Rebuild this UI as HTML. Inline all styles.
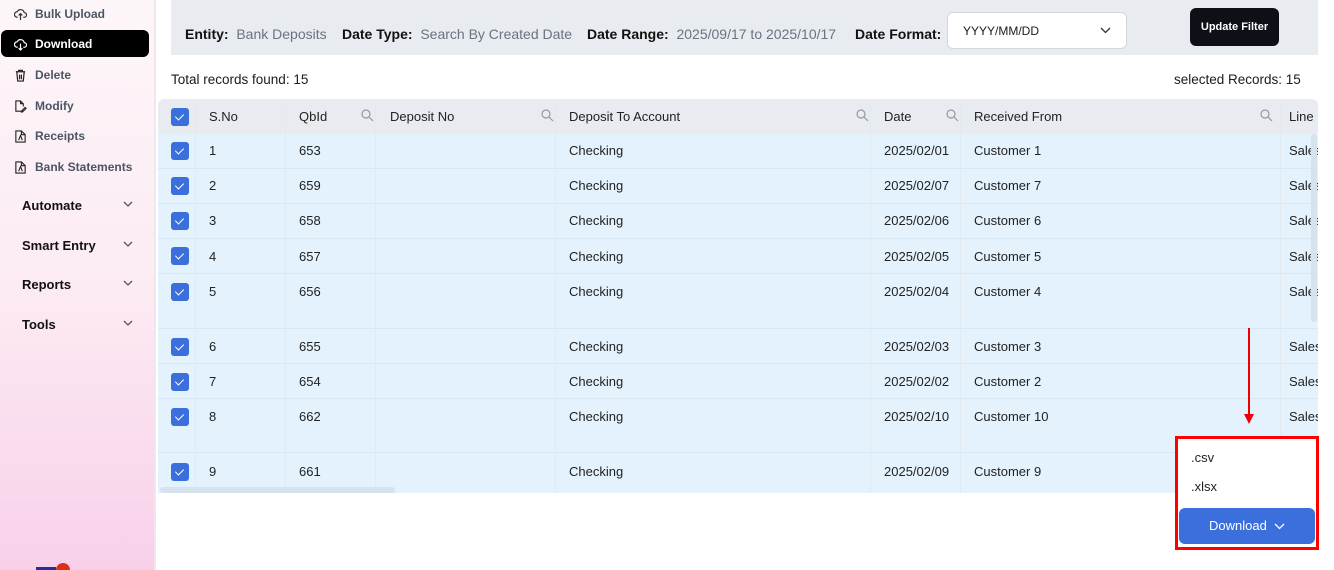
<!DOCTYPE html>
<html><head><style>
*{box-sizing:border-box;margin:0;padding:0}
html,body{width:1334px;height:570px;overflow:hidden}
body{background:#fff;font-family:"Liberation Sans",sans-serif;position:relative;color:#1b1b1b}
.side{position:absolute;left:0;top:0;width:156px;height:570px;background:linear-gradient(#fdf6f9 0%,#fcebf3 50%,#f8d0ea 100%);border-right:2px solid #f0e6ec;overflow:hidden}
.si{position:absolute;left:14px;font-size:12px;font-weight:bold;color:#4b5563;display:flex;align-items:center;gap:8px}
.si svg{width:13px;height:13px}
.act{position:absolute;left:1px;top:30px;width:148px;height:27px;background:#000;border-radius:6px}
.grp{position:absolute;left:22px;font-size:13px;font-weight:bold;color:#111}
.chev{position:absolute;left:123px;width:10px;height:6px}
.filter{position:absolute;left:171px;top:0;width:1147px;height:55px;background:#e8ebef}
.f{position:absolute;top:26px;font-size:14px}
.f b{color:#111}
.f span{color:#6b7280}
.sel{position:absolute;left:947px;top:12px;width:180px;height:37px;background:#fff;border:1px solid #d3d6db;border-radius:6px;font-size:12px;padding:11px 15px}
.btn{position:absolute;left:1190px;top:8px;width:89px;height:38px;background:#0d1117;border-radius:6px;color:#fff;font-size:11px;font-weight:bold;text-align:center;line-height:38px}
.tot{position:absolute;top:72px;font-size:13.5px}
.hdr{position:absolute;left:158px;top:99px;width:1160px;height:35px;background:#e8ebef;border-radius:6px 6px 0 0}
.body{position:absolute;left:158px;top:134px;width:1160px;height:359px;background:#e3f2fd}
.vl{position:absolute;top:99px;height:394px;width:1px;background:#e2eaf0}
.t{position:absolute;font-size:13px;color:#222}
.cb{position:absolute;left:171px;width:18px;height:18px;background:#3b6fdc;border-radius:3px}
.cb:after{content:"";position:absolute;left:6px;top:4px;width:4px;height:7px;border:solid #fff;border-width:0 1.5px 1.5px 0;transform:rotate(45deg)}
.rl{position:absolute;left:158px;width:1160px;height:1px;background:#d9e7f2}
.mag{position:absolute;top:108px;width:14px;height:14px}
</style></head><body>
<div class="side">
<div class="act"></div>
<div class="si" style="top:7px"><svg viewBox="0 0 14 14" fill="none" stroke="#333" stroke-width="1.3"><path d="M4 10H3.5a3 3 0 0 1 0-6 4 4 0 0 1 7.5 1 2.5 2.5 0 0 1 0 5H10M7 13V6M5 8l2-2 2 2"/></svg>Bulk Upload</div>
<div class="si" style="top:37px;color:#fff"><svg viewBox="0 0 14 14" fill="none" stroke="#fff" stroke-width="1.3"><path d="M4 10H3.5a3 3 0 0 1 0-6 4 4 0 0 1 7.5 1 2.5 2.5 0 0 1 0 5H10M7 6v7M5 11l2 2 2-2"/></svg>Download</div>
<div class="si" style="top:68px"><svg viewBox="0 0 14 14" fill="none" stroke="#222" stroke-width="1.3"><path d="M2 3h10M5 3V1.5h4V3M3 3l1 10h6l1-10M6 6v5M8 6v5"/></svg>Delete</div>
<div class="si" style="top:99px"><svg viewBox="0 0 14 14" fill="none" stroke="#222" stroke-width="1.2"><path d="M9 12H2V1h5l3 3v3M7 1v3h3M8 12l4-4 1 1-4 4H8z"/></svg>Modify</div>
<div class="si" style="top:129px"><svg viewBox="0 0 14 14" fill="none" stroke="#222" stroke-width="1.2"><path d="M2 1h6l4 4v8H2zM8 1v4h4M5 11l2-5 2 5"/></svg>Receipts</div>
<div class="si" style="top:160px"><svg viewBox="0 0 14 14" fill="none" stroke="#222" stroke-width="1.2"><path d="M2 1h6l4 4v8H2zM8 1v4h4M5 11l2-5 2 5"/></svg>Bank Statements</div>
<div class="grp" style="top:198px">Automate</div><svg class="chev" style="top:201px" viewBox="0 0 10 6" fill="none" stroke="#555" stroke-width="1.3"><path d="M1 1l4 4 4-4"/></svg>
<div class="grp" style="top:238px">Smart Entry</div><svg class="chev" style="top:241px" viewBox="0 0 10 6" fill="none" stroke="#555" stroke-width="1.3"><path d="M1 1l4 4 4-4"/></svg>
<div class="grp" style="top:277px">Reports</div><svg class="chev" style="top:280px" viewBox="0 0 10 6" fill="none" stroke="#555" stroke-width="1.3"><path d="M1 1l4 4 4-4"/></svg>
<div class="grp" style="top:317px">Tools</div><svg class="chev" style="top:320px" viewBox="0 0 10 6" fill="none" stroke="#555" stroke-width="1.3"><path d="M1 1l4 4 4-4"/></svg>
<div style="position:absolute;left:36px;top:567px;width:20px;height:3px;background:#2a2aa0"></div>
<div style="position:absolute;left:56px;top:563px;width:14px;height:14px;border-radius:50%;background:#d8321d"></div>
</div>
<div class="filter"></div>
<div class="f" style="left:185px"><b>Entity:</b>&nbsp; <span>Bank Deposits</span></div>
<div class="f" style="left:342px"><b>Date Type:</b>&nbsp; <span>Search By Created Date</span></div>
<div class="f" style="left:587px"><b>Date Range:</b>&nbsp; <span>2025/09/17 to 2025/10/17</span></div>
<div class="f" style="left:855px"><b>Date Format:</b></div>
<div class="sel">YYYY/MM/DD<svg style="position:absolute;right:15px;top:14px" width="11" height="7" viewBox="0 0 11 7" fill="none" stroke="#333" stroke-width="1.3"><path d="M1 1l4.5 4.5L10 1"/></svg></div>
<div class="btn">Update Filter</div>
<div class="tot" style="left:171px">Total records found: 15</div>
<div class="tot" style="left:1174px">selected Records: 15</div>
<div class="hdr"></div>
<div class="body"></div>
<div class="vl" style="left:195px"></div><div class="vl" style="left:285px"></div><div class="vl" style="left:375px"></div><div class="vl" style="left:555px"></div><div class="vl" style="left:870px"></div><div class="vl" style="left:960px"></div><div class="vl" style="left:1280px"></div>
<div class="rl" style="top:168px"></div><div class="rl" style="top:203px"></div><div class="rl" style="top:238px"></div><div class="rl" style="top:273px"></div><div class="rl" style="top:328px"></div><div class="rl" style="top:363px"></div><div class="rl" style="top:398px"></div><div class="rl" style="top:452px"></div>
<div class="cb" style="top:108px"></div>
<div class="t" style="left:209px;top:109px">S.No</div>
<div class="t" style="left:299px;top:109px">QbId</div>
<div class="t" style="left:390px;top:109px">Deposit No</div>
<div class="t" style="left:569px;top:109px">Deposit To Account</div>
<div class="t" style="left:884px;top:109px">Date</div>
<div class="t" style="left:974px;top:109px">Received From</div>
<div class="t" style="left:1289px;top:109px">Line</div>
<svg class="mag" style="left:360px" viewBox="0 0 14 14" fill="none" stroke="#999" stroke-width="1.2"><circle cx="6" cy="6" r="4"/><path d="M9 9l4 4"/></svg>
<svg class="mag" style="left:540px" viewBox="0 0 14 14" fill="none" stroke="#999" stroke-width="1.2"><circle cx="6" cy="6" r="4"/><path d="M9 9l4 4"/></svg>
<svg class="mag" style="left:855px" viewBox="0 0 14 14" fill="none" stroke="#999" stroke-width="1.2"><circle cx="6" cy="6" r="4"/><path d="M9 9l4 4"/></svg>
<svg class="mag" style="left:945px" viewBox="0 0 14 14" fill="none" stroke="#999" stroke-width="1.2"><circle cx="6" cy="6" r="4"/><path d="M9 9l4 4"/></svg>
<svg class="mag" style="left:1259px" viewBox="0 0 14 14" fill="none" stroke="#999" stroke-width="1.2"><circle cx="6" cy="6" r="4"/><path d="M9 9l4 4"/></svg>

<div class="cb" style="top:142px"></div><div class="t" style="left:209px;top:143px">1</div><div class="t" style="left:299px;top:143px">653</div><div class="t" style="left:569px;top:143px">Checking</div><div class="t" style="left:884px;top:143px">2025/02/01</div><div class="t" style="left:974px;top:143px">Customer 1</div><div class="t" style="left:1289px;top:143px">Sales</div>
<div class="cb" style="top:177px"></div><div class="t" style="left:209px;top:178px">2</div><div class="t" style="left:299px;top:178px">659</div><div class="t" style="left:569px;top:178px">Checking</div><div class="t" style="left:884px;top:178px">2025/02/07</div><div class="t" style="left:974px;top:178px">Customer 7</div><div class="t" style="left:1289px;top:178px">Sales</div>
<div class="cb" style="top:212px"></div><div class="t" style="left:209px;top:213px">3</div><div class="t" style="left:299px;top:213px">658</div><div class="t" style="left:569px;top:213px">Checking</div><div class="t" style="left:884px;top:213px">2025/02/06</div><div class="t" style="left:974px;top:213px">Customer 6</div><div class="t" style="left:1289px;top:213px">Sales</div>
<div class="cb" style="top:247px"></div><div class="t" style="left:209px;top:249px">4</div><div class="t" style="left:299px;top:249px">657</div><div class="t" style="left:569px;top:249px">Checking</div><div class="t" style="left:884px;top:249px">2025/02/05</div><div class="t" style="left:974px;top:249px">Customer 5</div><div class="t" style="left:1289px;top:249px">Sales</div>
<div class="cb" style="top:283px"></div><div class="t" style="left:209px;top:284px">5</div><div class="t" style="left:299px;top:284px">656</div><div class="t" style="left:569px;top:284px">Checking</div><div class="t" style="left:884px;top:284px">2025/02/04</div><div class="t" style="left:974px;top:284px">Customer 4</div><div class="t" style="left:1289px;top:284px">Sales</div>
<div class="cb" style="top:338px"></div><div class="t" style="left:209px;top:339px">6</div><div class="t" style="left:299px;top:339px">655</div><div class="t" style="left:569px;top:339px">Checking</div><div class="t" style="left:884px;top:339px">2025/02/03</div><div class="t" style="left:974px;top:339px">Customer 3</div><div class="t" style="left:1289px;top:339px">Sales</div>
<div class="cb" style="top:373px"></div><div class="t" style="left:209px;top:374px">7</div><div class="t" style="left:299px;top:374px">654</div><div class="t" style="left:569px;top:374px">Checking</div><div class="t" style="left:884px;top:374px">2025/02/02</div><div class="t" style="left:974px;top:374px">Customer 2</div><div class="t" style="left:1289px;top:374px">Sales</div>
<div class="cb" style="top:408px"></div><div class="t" style="left:209px;top:409px">8</div><div class="t" style="left:299px;top:409px">662</div><div class="t" style="left:569px;top:409px">Checking</div><div class="t" style="left:884px;top:409px">2025/02/10</div><div class="t" style="left:974px;top:409px">Customer 10</div><div class="t" style="left:1289px;top:409px">Sales</div>
<div class="cb" style="top:463px"></div><div class="t" style="left:209px;top:464px">9</div><div class="t" style="left:299px;top:464px">661</div><div class="t" style="left:569px;top:464px">Checking</div><div class="t" style="left:884px;top:464px">2025/02/09</div><div class="t" style="left:974px;top:464px">Customer 9</div>
<div style="position:absolute;left:1318px;top:99px;width:16px;height:400px;background:#fff"></div>
<div style="position:absolute;left:1311px;top:134px;width:6px;height:188px;background:#d7e3ec;border-radius:3px"></div>
<div style="position:absolute;left:160px;top:487px;width:235px;height:6px;background:#d7e3ec;border-radius:3px"></div>
<div style="position:absolute;left:1248px;top:328px;width:2px;height:90px;background:#e00"></div>
<div style="position:absolute;left:1244px;top:414px;width:0;height:0;border-left:5px solid transparent;border-right:5px solid transparent;border-top:10px solid #e00"></div>
<div style="position:absolute;left:1175px;top:436px;width:144px;height:114px;border:3px solid #f00;background:#fff"></div>
<div class="t" style="left:1191px;top:450px">.csv</div>
<div class="t" style="left:1191px;top:479px">.xlsx</div>
<div style="position:absolute;left:1179px;top:508px;width:136px;height:36px;background:#3b6fdc;border-radius:6px;color:#fff;font-size:13px;line-height:36px;padding-left:30px">Download<svg style="position:absolute;left:95px;top:15px" width="11" height="7" viewBox="0 0 11 7" fill="none" stroke="#fff" stroke-width="1.3"><path d="M1 1l4.5 4.5L10 1"/></svg></div>
</body></html>
